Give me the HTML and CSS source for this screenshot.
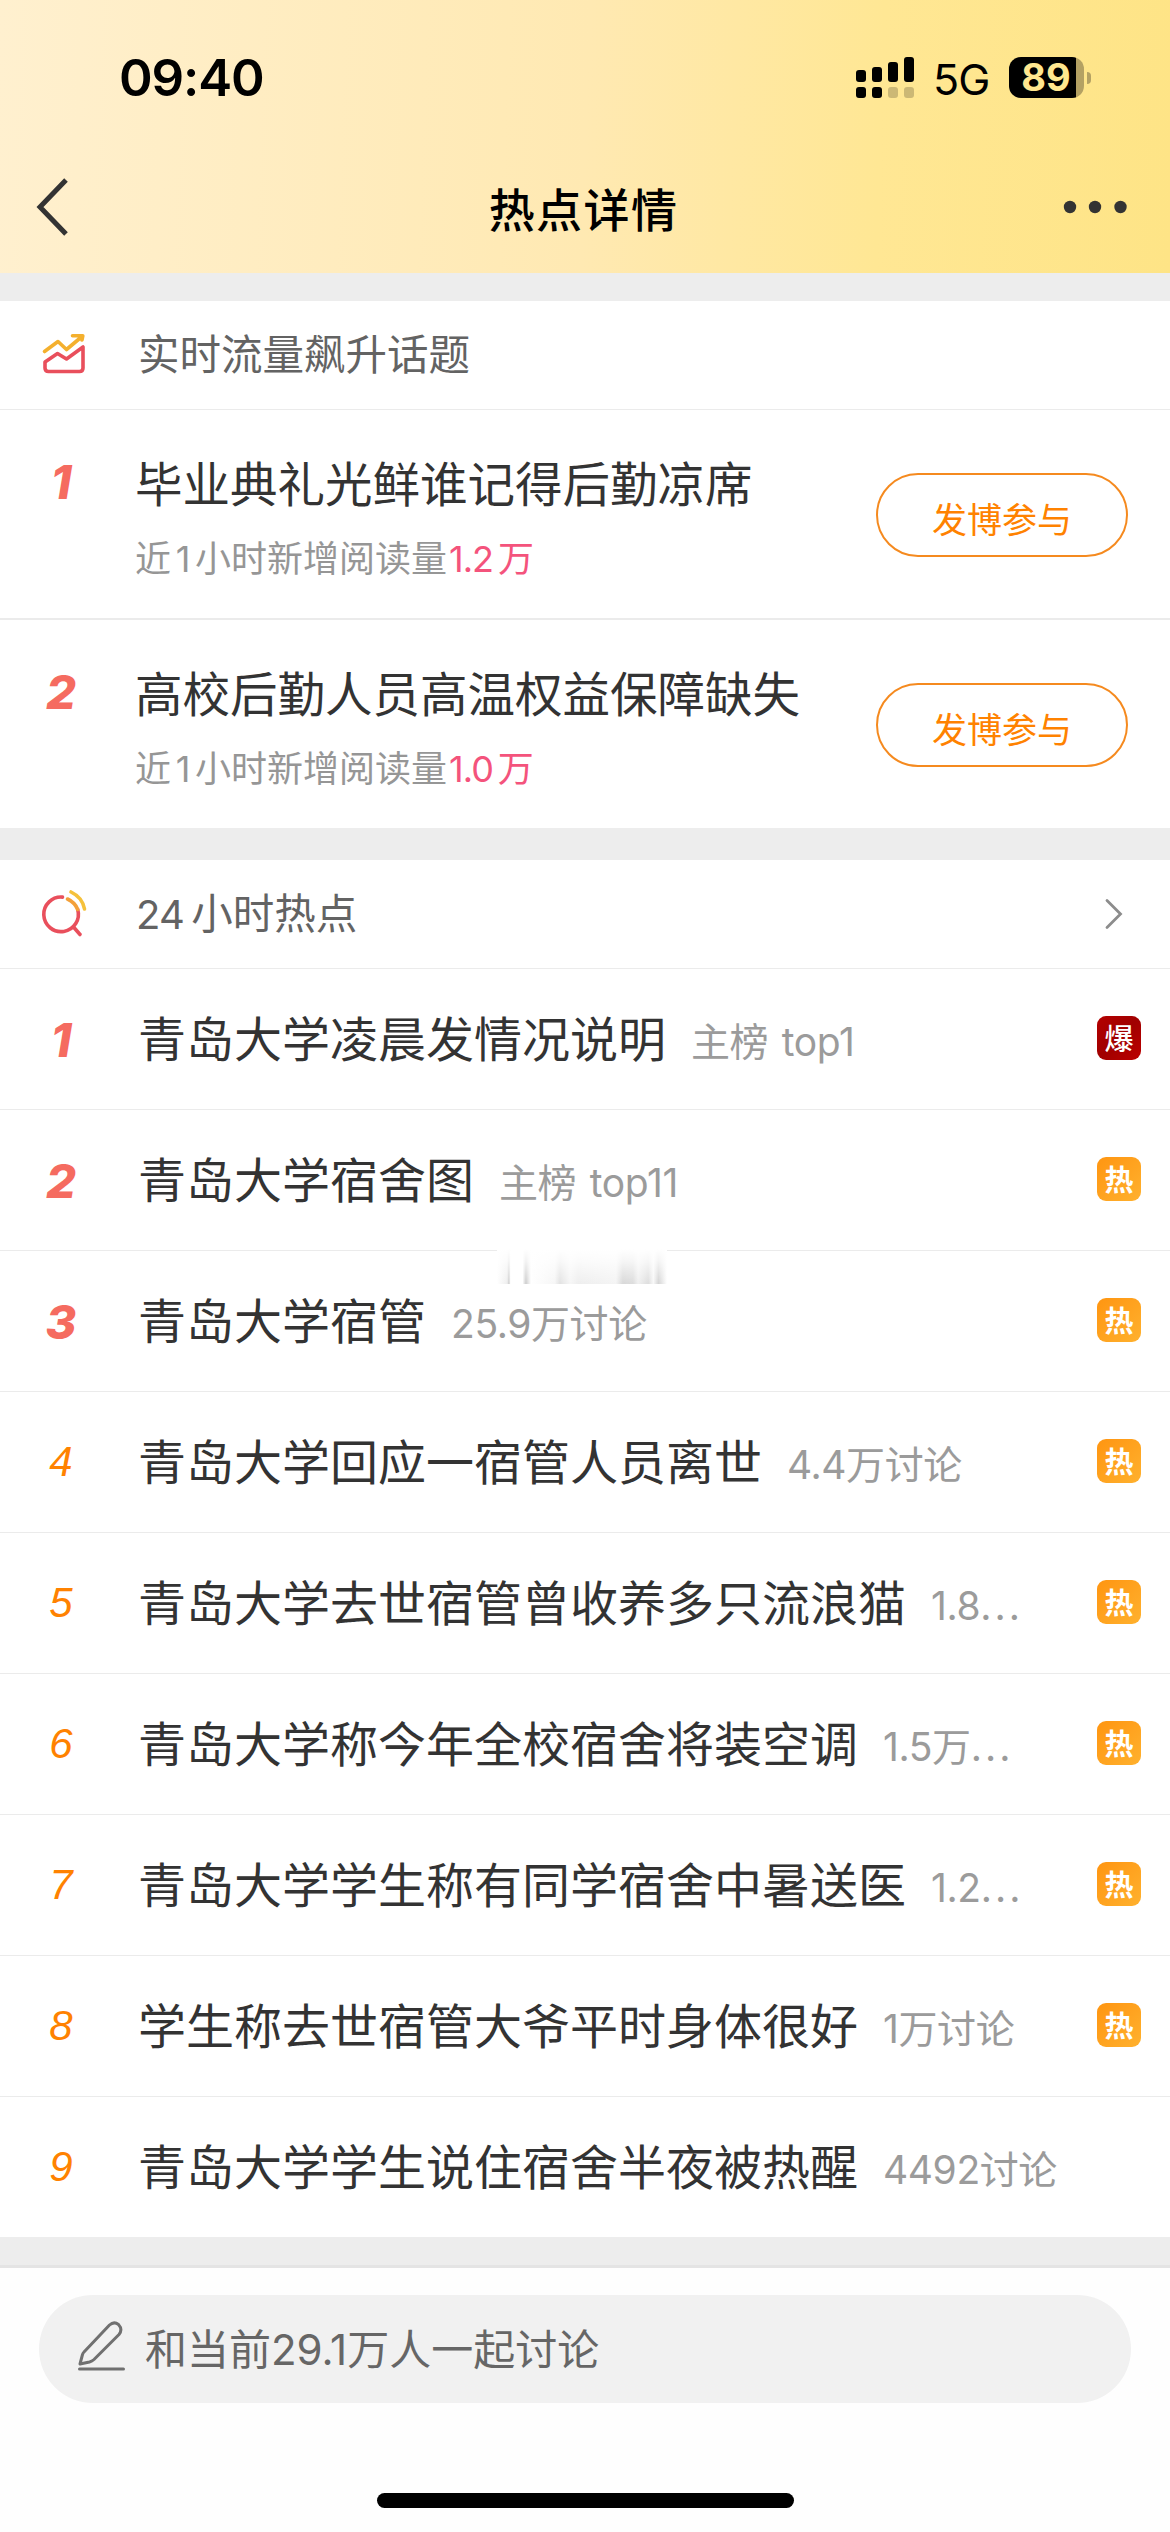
FILE: index.html
```html
<!DOCTYPE html>
<html lang="zh-CN">
<head>
<meta charset="utf-8">
<title>热点详情</title>
<link rel="stylesheet" href="styles.css">
</head>
<body>
<header class="top">
  <div class="status">
    <span class="clock">09:40</span>
    <div class="status-right">
      <svg class="signal" width="58" height="41" viewBox="0 0 58 41">
        <rect x="0" y="13" width="10" height="12" rx="3"/><rect x="16" y="10" width="10" height="15" rx="3"/>
        <rect x="32" y="5" width="10" height="20" rx="3"/><rect x="48" y="0" width="10" height="25" rx="3"/>
        <rect x="0" y="30" width="10" height="11" rx="3"/><rect x="16" y="30" width="10" height="11" rx="3"/>
        <rect x="32" y="30" width="10" height="11" rx="3" opacity=".2"/><rect x="48" y="30" width="10" height="11" rx="3" opacity=".2"/>
      </svg>
      <span class="net">5G</span>
      <span class="battery">89</span>
      <span class="nub"></span>
    </div>
  </div>
  <nav class="nav">
    <svg class="back" width="36" height="60" viewBox="0 0 36 60"><path d="M32 3 6 30 32 57" fill="none" stroke="#333" stroke-width="5"/></svg>
    <h1 class="nav-title">热点详情</h1>
    <svg class="more" width="64" height="14" viewBox="0 0 64 14" fill="#333"><circle cx="7" cy="7" r="6.2"/><circle cx="32" cy="7" r="6.2"/><circle cx="57.500" cy="7" r="6.200"/></svg>
  </nav>
</header>

<section class="card topics">
  <div class="head">
    <svg class="head-icon" width="46" height="46" viewBox="0 0 46 46" fill="none" stroke-linecap="round" stroke-linejoin="round" stroke-width="3.6">
      <path d="M4.500 19.500 18 9.500 26.500 17.500 42 4.500M32.500 3.800H42.800L42 8" stroke="#f4b02e"/>
      <path d="M5 30 17.500 21.500 26.500 27 43 15V36Q43 39.500 39.500 39.500H8.500Q5 39.500 5 36Z" stroke="#e94f5c"/>
    </svg>
    <h2 class="head-title">实时流量飙升话题</h2>
  </div>
  <div class="topic">
    <span class="rank rank-top">1</span>
    <div class="topic-text">
      <div class="topic-title">毕业典礼光鲜谁记得后勤凉席</div>
      <div class="topic-sub">近<i class="num">1</i>小时新增阅读量<b class="hot"><i class="fig">1.2</i>万</b></div>
    </div>
    <button class="join">发博参与</button>
  </div>
  <div class="topic">
    <span class="rank rank-top">2</span>
    <div class="topic-text">
      <div class="topic-title">高校后勤人员高温权益保障缺失</div>
      <div class="topic-sub">近<i class="num">1</i>小时新增阅读量<b class="hot"><i class="fig">1.0</i>万</b></div>
    </div>
    <button class="join">发博参与</button>
  </div>
</section>

<section class="card day">
  <div class="head">
    <svg class="head-icon" width="50" height="50" viewBox="0 0 50 50" fill="none" stroke-linecap="round" stroke-width="3.600">
      <path d="M22.500 8.100A17.300 17.300 0 1 0 37.700 20.500" stroke="#e94f5c"/>
      <path d="M27.500 10Q35 13.500 37.700 20.500" stroke="#f3a03a"/>
      <path d="M31 3Q42.500 8.500 44.500 20" stroke="#f5c13b"/>
      <path d="M33.500 38 40 45.500" stroke="#e94f5c"/>
    </svg>
    <h2 class="head-title"><span class="fig24">24</span>小时热点</h2>
    <svg class="chev" width="18" height="32" viewBox="0 0 18 32"><path d="M2 2.500 15.500 16 2 29.500" fill="none" stroke="#8c8c8c" stroke-width="2.800" stroke-linecap="round"/></svg>
  </div>
  <ol class="list">
    <li class="row"><span class="rank rank-top">1</span><span class="title">青岛大学凌晨发情况说明</span><span class="meta">主榜 top1</span><span class="tag tag-boom">爆</span></li>
    <li class="row"><span class="rank rank-top">2</span><span class="title">青岛大学宿舍图</span><span class="meta">主榜 top11</span><span class="tag">热</span></li>
    <li class="row"><span class="smudge"></span><span class="rank rank-top">3</span><span class="title">青岛大学宿管</span><span class="meta">25.9万讨论</span><span class="tag">热</span></li>
    <li class="row"><span class="rank">4</span><span class="title">青岛大学回应一宿管人员离世</span><span class="meta">4.4万讨论</span><span class="tag">热</span></li>
    <li class="row"><span class="rank">5</span><span class="title">青岛大学去世宿管曾收养多只流浪猫</span><span class="meta">1.8<span class="dots">...</span></span><span class="tag">热</span></li>
    <li class="row"><span class="rank">6</span><span class="title">青岛大学称今年全校宿舍将装空调</span><span class="meta">1.5万<span class="dots">...</span></span><span class="tag">热</span></li>
    <li class="row"><span class="rank">7</span><span class="title">青岛大学学生称有同学宿舍中暑送医</span><span class="meta">1.2<span class="dots">...</span></span><span class="tag">热</span></li>
    <li class="row"><span class="rank">8</span><span class="title">学生称去世宿管大爷平时身体很好</span><span class="meta">1万讨论</span><span class="tag">热</span></li>
    <li class="row"><span class="rank">9</span><span class="title">青岛大学学生说住宿舍半夜被热醒</span><span class="meta">4492讨论</span></li>
  </ol>
</section>

<footer class="bottom">
  <div class="input">
    <svg class="pen" width="50" height="52" viewBox="0 0 50 52" fill="none" stroke="#707070" stroke-width="3" stroke-linecap="round" stroke-linejoin="round">
      <path d="M4 44 6.500 34.500Q7 33 8 32L33.500 5Q38 1 42.500 4.500 47 9.500 43 14.500L18 39.500Q16 41.300 13.500 42Z"/>
      <path d="M3.500 49H47.500"/>
    </svg>
    <span class="input-text">和当前29.1万人一起讨论</span>
  </div>
  <div class="home"></div>
</footer>
</body>
</html>
```
FILE: styles.css
```css
* { box-sizing: border-box; }
body {
  margin: 0;
  width: 1170px;
  height: 2532px;
  overflow: hidden;
  display: flex;
  flex-direction: column;
  background: #ededed;
  color: #333;
  font-family: Inter, "Noto Sans CJK SC", sans-serif;
}
h1, h2, ol { margin: 0; padding: 0; font-weight: 400; }
i, b { font-style: normal; font-weight: 400; }

.top {
  height: 273px;
  flex: none;
  background: linear-gradient(92deg, #fff0cf, #ffe9b2 50%, #ffe794 75%, #fee486);
}
.status {
  height: 155px;
  display: flex;
  justify-content: space-between;
  align-items: center;
  padding: 0 79px 0 119px;
  color: #000;
}
.clock { font-size: 51px; font-weight: 600; letter-spacing: -1.1px; }
.status-right { display: flex; align-items: center; }
.net { width: 95px; padding: 2px 0 0 19px; font-size: 43px; letter-spacing: -1px; }
.battery {
  width: 75px;
  height: 41px;
  padding-right: 1px;
  border-radius: 12px;
  background: linear-gradient(90deg, #000 67px, #b4a163 67px);
  color: #ffe78f;
  font-size: 38px;
  font-weight: 700;
  line-height: 41px;
  text-align: center;
}
.nub { width: 4px; height: 12px; margin-left: 3px; border-radius: 0 6px 6px 0; background: #b4a163; }

.nav {
  height: 104px;
  display: flex;
  align-items: center;
  justify-content: space-between;
  padding: 0 43px 0 34px;
}
.back { margin-right: 34px; }
.nav-title { font-size: 46px; font-weight: 500; letter-spacing: 1.4px; color: #000; }

.card { flex: none; background: #fff; }
.topics { margin-top: 28px; }
.day { margin-top: 32px; }
.head {
  height: 109px;
  display: flex;
  align-items: center;
  padding: 0 47px 0 40px;
  border-bottom: 1px solid #ebebeb;
}
.head-icon { flex: none; }
.topics .head-icon { margin-right: 52px; }
.day .head-icon { margin-right: 46px; }
.head-title { flex: 1; font-size: 41.5px; line-height: 60px; color: #636363; }
.fig24 { margin-right: 7px; font-size: 40px; letter-spacing: -.7px; }

.rank {
  width: 122px;
  flex: none;
  text-align: center;
  font-family: "Liberation Sans", sans-serif;
  font-size: 42px;
  font-style: italic;
  color: #ff8200;
}
.rank-top { font-family: Inter, sans-serif; font-size: 47px; font-weight: 800; color: #f56b60; }

.topic {
  height: 210px;
  display: grid;
  grid-template-columns: 135px 1fr 252px;
  padding: 48px 42px 0 0;
  border-bottom: 2px solid #ebebeb;
}
.topic:last-child { height: 208px; border-bottom: 0; }
.topic .rank { line-height: 48px; }
.topic-title { font-size: 47.5px; line-height: 54px; white-space: nowrap; }
.topic-sub { margin-top: 25px; font-size: 36px; line-height: 44px; color: #969696; }
.num { display: inline-block; width: 24px; text-align: center; }
.fig { margin: 0 5px 0 2px; letter-spacing: -1px; }
.hot { color: #f4537c; }
.join {
  height: 84px;
  margin-top: 15px;
  padding: 6px 0 0;
  border: 2px solid #f58a1f;
  border-radius: 42px;
  background: #fff;
  color: #ff8200;
  font: 35px/50px "Noto Sans CJK SC", sans-serif;
}

.list { list-style: none; }
.row {
  position: relative;
  height: 141px;
  display: flex;
  align-items: center;
  padding-right: 29px;
  border-bottom: 1px solid #ebebeb;
}
.row:last-child { border-bottom: 0; height: 140px; }
.title { margin: -7px 0 0 16px; font-size: 48px; white-space: nowrap; }
.meta {
  margin: 6px 0 0 25px;
  font-size: 39px;
  line-height: 58px;
  letter-spacing: -.4px;
  word-spacing: 3px;
  color: #9b9b9b;
  white-space: nowrap;
}
.dots { letter-spacing: 3px; }
.tag {
  width: 44px;
  height: 44px;
  margin: -2px 0 0 auto;
  border-radius: 9px;
  background: linear-gradient(135deg, #ff9511, #ffb12e);
  color: #fff;
  font-family: "Noto Sans CJK SC", sans-serif;
  font-size: 29px;
  font-weight: 700;
  line-height: 43px;
  text-align: center;
}
.tag-boom { background: linear-gradient(135deg, #b40000, #a00000 50%, #bd0000); font-weight: 500; }
.smudge {
  position: absolute;
  left: 497px;
  top: -2px;
  width: 170px;
  height: 35px;
  background:
    linear-gradient(#fff, rgba(255,255,255,.75) 35%, rgba(255,255,255,0)),
    linear-gradient(90deg, #fff, #eee 6%, #ccc 7%, #fff 8%, #fff 15%, #ccc 17%, #fff 20%, #f6f6f6 34%, #e2e2e2 37%, #f6f6f6 43%, #eee 48%, #f4f4f4 70%, #d8d8d8 74%, #dcdcdc 80%, #f0f0f0 83%, #ddd 89%, #f8f8f8 92%, #d4d4d4 95%, #fff);
}

.bottom {
  flex: 1;
  margin-top: 28px;
  border-top: 3px solid #e4e4e4;
  background: #fefefe;
  display: flex;
  flex-direction: column;
  align-items: center;
}
.input {
  width: 1092px;
  height: 108px;
  margin-top: 27px;
  padding-left: 37px;
  display: flex;
  align-items: center;
  border-radius: 54px;
  background: #f1f1f1;
}
.pen { flex: none; margin: -6px 19px 0 0; }
.input-text { margin-top: -6px; font-size: 42px; color: #666; }
.home { width: 417px; height: 15px; margin-top: 90px; border-radius: 8px; background: #000; }
```
